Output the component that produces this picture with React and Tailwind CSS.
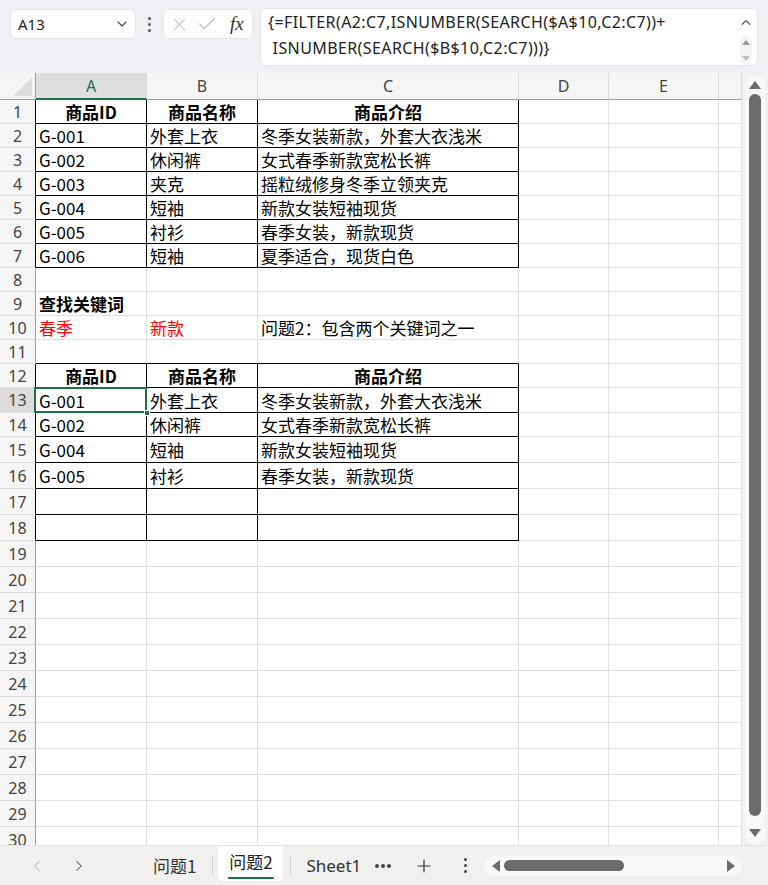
import React from "react";
import { ChevronDown, ChevronUp, ChevronLeft, ChevronRight, X, Check, Plus } from "lucide-react";

const CELL_FONT = { fontFamily: '"Noto Sans CJK SC", "Noto Sans", sans-serif' };
const UI_FONT = { fontFamily: '"Noto Sans", "Noto Sans CJK SC", sans-serif' };

const COLS = [
  { key: "A", w: 111 },
  { key: "B", w: 111 },
  { key: "C", w: 261 },
  { key: "D", w: 90 },
  { key: "E", w: 110 },
  { key: "F", w: 23 },
];

const ROW_H = [24, 24, 24, 24, 24, 24, 24, 24, 24, 24, 24, 24, 25, 24, 26, 26, 26, 26, 26, 26, 26, 26, 26, 26, 26, 26, 26, 26, 26, 26];

// cell content keyed by row number: [A, B, C]
const DATA = {
  1: [{ t: "商品ID", b: true, c: true }, { t: "商品名称", b: true, c: true }, { t: "商品介绍", b: true, c: true }],
  2: [{ t: "G-001" }, { t: "外套上衣" }, { t: "冬季女装新款，外套大衣浅米" }],
  3: [{ t: "G-002" }, { t: "休闲裤" }, { t: "女式春季新款宽松长裤" }],
  4: [{ t: "G-003" }, { t: "夹克" }, { t: "摇粒绒修身冬季立领夹克" }],
  5: [{ t: "G-004" }, { t: "短袖" }, { t: "新款女装短袖现货" }],
  6: [{ t: "G-005" }, { t: "衬衫" }, { t: "春季女装，新款现货" }],
  7: [{ t: "G-006" }, { t: "短袖" }, { t: "夏季适合，现货白色" }],
  9: [{ t: "查找关键词", b: true, over: true }],
  10: [{ t: "春季", red: true }, { t: "新款", red: true }, { t: "问题2：包含两个关键词之一" }],
  12: [{ t: "商品ID", b: true, c: true }, { t: "商品名称", b: true, c: true }, { t: "商品介绍", b: true, c: true }],
  13: [{ t: "G-001" }, { t: "外套上衣" }, { t: "冬季女装新款，外套大衣浅米" }],
  14: [{ t: "G-002" }, { t: "休闲裤" }, { t: "女式春季新款宽松长裤" }],
  15: [{ t: "G-004" }, { t: "短袖" }, { t: "新款女装短袖现货" }],
  16: [{ t: "G-005" }, { t: "衬衫" }, { t: "春季女装，新款现货" }],
};

const inTable = (r) => (r >= 1 && r <= 7) || (r >= 12 && r <= 18);

function TopBar() {
  return (
    <div className="h-[73px] shrink-0 bg-[#eef0f3] relative" style={UI_FONT}>
      <div className="flex items-start pt-[8px] pl-[10px]">
        {/* name box */}
        <div className="mt-[1px] w-[126px] h-[30px] bg-white rounded-[6px] border border-[#e3e5e8] flex items-center justify-between pl-[7px] pr-[5px]">
          <span className="text-[15px] text-[#222]">A13</span>
          <ChevronDown size={16} strokeWidth={1.6} className="text-[#444]" />
        </div>
        {/* vertical ellipsis */}
        <div className="w-[27px] h-[32px] flex flex-col items-center justify-center gap-[3px]">
          <span className="w-[3px] h-[3px] bg-[#555] rounded-full" />
          <span className="w-[3px] h-[3px] bg-[#555] rounded-full" />
          <span className="w-[3px] h-[3px] bg-[#555] rounded-full" />
        </div>
        {/* cancel / enter / function */}
        <div className="mt-[1px] w-[90px] h-[30px] bg-white rounded-[6px] border border-[#e3e5e8] flex items-center pl-[5px] gap-[6px]">
          <X size={21} strokeWidth={1.2} className="text-[#b8b8b8]" />
          <Check size={22} strokeWidth={1.2} className="text-[#b8b8b8]" />
          <span className="ml-[6px] text-[19px] italic text-[#333]" style={{ fontFamily: '"Liberation Serif", "DejaVu Serif", serif' }}>fx</span>
        </div>
        {/* formula box */}
        <div className="ml-[7px] w-[498px] h-[58px] bg-white rounded-[6px] border border-[#e3e5e8] flex">
          <div className="flex-1 pl-[7px] pt-[0px] text-[16px] leading-[26px] text-[#222] tracking-[0.4px] whitespace-pre">
            <div>{"{=FILTER(A2:C7,ISNUMBER(SEARCH($A$10,C2:C7))+"}</div>
            <div>{" ISNUMBER(SEARCH($B$10,C2:C7)))}"}</div>
          </div>
          <div className="w-[22px] flex flex-col items-center pt-[6px]">
            <ChevronUp size={16} strokeWidth={1.6} className="text-[#333]" />
            <div className="mt-[6px] w-[12px] h-[30px] rounded-full bg-[#f4f4f4] flex flex-col items-center justify-between py-[4px]">
              <svg width="8" height="5" viewBox="0 0 8 5"><path d="M0 5 L4 0 L8 5 Z" fill="#9a9a9a" /></svg>
              <svg width="8" height="5" viewBox="0 0 8 5"><path d="M0 0 L4 5 L8 0 Z" fill="#bdbdbd" /></svg>
            </div>
          </div>
        </div>
      </div>
    </div>
  );
}

function HeaderRow() {
  return (
    <div className="flex h-[27px] shrink-0">
      <div className="w-[36px] shrink-0 bg-[#f5f5f5] border-r border-b border-[#9f9f9f] relative">
        <svg className="absolute right-[3px] bottom-[3px]" width="19" height="19" viewBox="0 0 19 19">
          <path d="M19 0 L19 19 L0 19 Z" fill="#dcdcdc" />
        </svg>
      </div>
      {COLS.map((c) => {
        const sel = c.key === "A";
        return (
          <div
            key={c.key}
            style={{ width: c.w }}
            className={
              "shrink-0 flex items-center justify-center text-[16px] border-r " +
              (sel
                ? "bg-[#dedede] text-[#1e7145] border-[#d0d0d0] border-b-2 border-b-[#1e7145]"
                : "bg-[#f5f5f5] text-[#444] border-[#dadada] border-b border-b-[#9f9f9f]")
            }
          >
            {c.key === "F" ? "" : c.key}
          </div>
        );
      })}
    </div>
  );
}

function Row({ r, h }) {
  const data = DATA[r] || [];
  const sel = r === 13;
  const rowBlack = inTable(r);
  return (
    <div className="flex shrink-0" style={{ height: h }}>
      <div
        className={
          "w-[36px] shrink-0 flex items-center justify-center text-[16px] border-b border-b-[#dadada] border-r " +
          (sel ? "bg-[#dcdcdc] text-[#444] " : "bg-[#f5f5f5] text-[#444] ") +
          (rowBlack ? "border-r-black" : "border-r-[#9f9f9f]")
        }
        style={UI_FONT}
      >
        {r}
      </div>
      {COLS.map((c, i) => {
        const cell = i < 3 ? data[i] : null;
        const black = rowBlack && i < 3;
        const topOfTable = (r === 11) && i < 3;
        const bottomBlack = black || topOfTable;
        return (
          <div
            key={c.key}
            style={{ width: c.w, ...CELL_FONT }}
            className={
              "shrink-0 relative flex items-center border-r border-b bg-white " +
              (black ? "border-r-black " : "border-r-[#e1e1e1] ") +
              (bottomBlack ? "border-b-black" : "border-b-[#e1e1e1]")
            }
          >
            {cell && (
              <span
                className={
                  "text-[17px] leading-none whitespace-nowrap " +
                  (cell.c ? "w-full text-center " : "pl-[3px] ") +
                  (cell.b ? "font-bold " : "") +
                  (cell.red ? "text-[#ff0000] " : "text-black ") +
                  (cell.over ? "relative z-10" : "")
                }
              >
                {cell.t}
              </span>
            )}
            {sel && i === 0 && (
              <>
                <div className="absolute -left-[2px] -top-[1px] right-[-1px] bottom-[-1px] border-2 border-[#1e7145] pointer-events-none" />
                <div className="absolute right-[-4px] bottom-[-4px] w-[6px] h-[6px] bg-[#1e7145] border border-white z-10" />
              </>
            )}
          </div>
        );
      })}
    </div>
  );
}

function VScroll() {
  return (
    <div className="w-[26px] shrink-0 bg-[#f1f1f1] flex justify-center pt-[2px]">
      <div className="w-[20px] h-[770px] rounded-full bg-[#f8f8f8] flex flex-col items-center pt-[6px]">
        <svg width="12" height="8" viewBox="0 0 12 8"><path d="M0 8 L6 0 L12 8 Z" fill="#6b6b6b" /></svg>
        <div className="mt-[5px] w-[12px] h-[722px] rounded-full bg-[#6b6b6b]" />
        <svg className="mt-[13px]" width="12" height="8" viewBox="0 0 12 8"><path d="M0 0 L6 8 L12 0 Z" fill="#6b6b6b" /></svg>
      </div>
    </div>
  );
}

function BottomBar() {
  return (
    <div className="h-[40px] shrink-0 bg-[#f1f0ee] border-t border-[#e4e3e1] flex items-center relative" style={{ ...UI_FONT }}>
      <div className="flex items-center pl-[28px] gap-[24px]">
        <ChevronLeft size={18} strokeWidth={1.4} className="text-[#b5b5b5]" />
        <ChevronRight size={18} strokeWidth={1.4} className="text-[#555]" />
      </div>
      <div className="flex items-center ml-[65px] h-full" style={CELL_FONT}>
        <span className="text-[17px] text-[#333] px-[0px]">问题1</span>
        <span className="ml-[16px] w-px h-[20px] bg-[#d2d2d2]" />
        <div className="ml-[5px] h-[35px] self-start bg-white rounded-b-[6px] w-[65px] flex flex-col items-center justify-center">
          <span className="text-[17px] text-[#222] leading-[22px] mt-[2px]">问题2</span>
          <span className="mt-[4px] w-[46px] h-[2px] bg-[#1e7145] rounded-full" />
        </div>
        <span className="ml-[7px] w-px h-[20px] bg-[#d2d2d2]" />
        <span className="ml-[15px] text-[17px] text-[#333]" style={UI_FONT}>Sheet1</span>
        <div className="ml-[14px] flex items-center gap-[2px]">
          <span className="w-[4px] h-[4px] rounded-full bg-[#444]" />
          <span className="w-[4px] h-[4px] rounded-full bg-[#444]" />
          <span className="w-[4px] h-[4px] rounded-full bg-[#444]" />
        </div>
        <Plus size={20} strokeWidth={1.4} className="ml-[23px] text-[#333]" />
        <div className="ml-[30px] flex flex-col items-center gap-[3px]">
          <span className="w-[3px] h-[3px] bg-[#444] rounded-full" />
          <span className="w-[3px] h-[3px] bg-[#444] rounded-full" />
          <span className="w-[3px] h-[3px] bg-[#444] rounded-full" />
        </div>
      </div>
      {/* horizontal scrollbar */}
      <div className="ml-[17px] w-[258px] h-[20px] rounded-full bg-[#f8f8f7] flex items-center pl-[8px] pr-[7px]">
        <svg width="8" height="12" viewBox="0 0 8 12"><path d="M8 0 L0 6 L8 12 Z" fill="#6b6b6b" /></svg>
        <div className="ml-[4px] w-[120px] h-[11px] rounded-full bg-[#6b6b6b]" />
        <div className="flex-1" />
        <svg width="8" height="12" viewBox="0 0 8 12"><path d="M0 0 L8 6 L0 12 Z" fill="#6b6b6b" /></svg>
      </div>
    </div>
  );
}

export default function App() {
  return (
    <div className="w-[768px] h-[885px] flex flex-col overflow-hidden bg-white" style={UI_FONT}>
      <TopBar />
      <div className="flex h-[772px] shrink-0 overflow-hidden">
        <div className="w-[742px] shrink-0 flex flex-col overflow-hidden bg-white">
          <HeaderRow />
          {ROW_H.map((h, i) => (
            <Row key={i} r={i + 1} h={h} />
          ))}
        </div>
        <VScroll />
      </div>
      <BottomBar />
    </div>
  );
}
